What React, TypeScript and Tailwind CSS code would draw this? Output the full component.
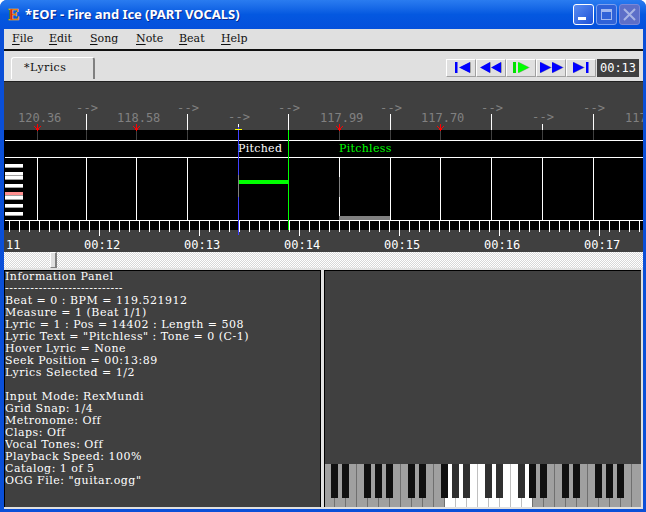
import React from 'react';

const BEATS = [37, 86, 136, 187, 238, 288, 339, 390, 440, 491, 542, 593];
const BPM_LABELS = [
  { x: 18, text: '120.36' },
  { x: 117, text: '118.58' },
  { x: 320, text: '117.99' },
  { x: 421, text: '117.70' },
  { x: 625, text: '117' },
];
const ARROWS = [
  { x: 76, y: 112 },
  { x: 177, y: 112 },
  { x: 228, y: 121 },
  { x: 278, y: 112 },
  { x: 380, y: 112 },
  { x: 481, y: 112 },
  { x: 532, y: 121 },
  { x: 583, y: 112 },
];
const TIMES = [
  { x: 6, text: '11' },
  { x: 84, text: '00:12' },
  { x: 184, text: '00:13' },
  { x: 284, text: '00:14' },
  { x: 384, text: '00:15' },
  { x: 484, text: '00:16' },
  { x: 584, text: '00:17' },
];
const KEY_BARS: [number, string][] = [
  [164, '#ffffff'],
  [172, '#ffffff'],
  [176, '#ffffff'],
  [184, '#ffffff'],
  [192, '#ff9090'],
  [196, '#ffffff'],
  [204, '#ffffff'],
  [212, '#ffffff'],
];
const BLACK_KEYS = [331, 342, 364, 375, 386, 408, 419, 441, 452, 463, 485, 496, 518, 529, 540, 562, 573, 595, 606, 617];
const INFO_LINES = [
  'Information Panel',
  '----------------------------',
  'Beat = 0 : BPM = 119.521912',
  'Measure = 1 (Beat 1/1)',
  'Lyric = 1 : Pos = 14402 : Length = 508',
  'Lyric Text = "Pitchless" : Tone = 0 (C-1)',
  'Hover Lyric = None',
  'Seek Position = 00:13:89',
  'Lyrics Selected = 1/2',
  '\u00a0',
  'Input Mode: RexMundi',
  'Grid Snap: 1/4',
  'Metronome: Off',
  'Claps: Off',
  'Vocal Tones: Off',
  'Playback Speed: 100%',
  'Catalog: 1 of 5',
  'OGG File: "guitar.ogg"',
];
const MENUS = [
  { first: 'F', rest: 'ile', w: 37 },
  { first: 'E', rest: 'dit', w: 41 },
  { first: 'S', rest: 'ong', w: 46 },
  { first: 'N', rest: 'ote', w: 43 },
  { first: 'B', rest: 'eat', w: 42 },
  { first: 'H', rest: 'elp', w: 30 },
];

const Timeline = () => {
  const ticks = [];
  for (let x = 9; x < 643; x += 10) {
    const major = (x - 99) % 100 === 0;
    ticks.push(<rect key={x} x={x} y={220} width={1} height={major ? 16 : 12} fill="#ffffff" />);
  }
  return (
    <svg width={639} height={171} viewBox="4 81 639 171" className="block" shapeRendering="crispEdges">
      <rect x={4} y={81} width={639} height={171} fill="#404040" />
      <rect x={4} y={81} width={639} height={1} fill="#202020" />
      <rect x={4} y={130} width={639} height={100} fill="#000000" />
      <rect x={5} y={140} width={638} height={1} fill="#ffffff" />
      <rect x={5} y={157} width={638} height={1} fill="#ffffff" />
      <rect x={5} y={220} width={638} height={1} fill="#ffffff" />

      {KEY_BARS.map(([y, c], i) => (
        <g key={i}>
          <rect x={5} y={y} width={18} height={3} fill={c} />
          <rect x={5} y={y + 3} width={18} height={1} fill="#a0a0a0" />
        </g>
      ))}

      {BEATS.map((x) => {
        const measure = [37, 136, 339, 440].includes(x);
        const top = x === 542 ? 124 : 114;
        return (
          <g key={x}>
            {x !== 238 && x !== 288 && !measure && <rect x={x} y={top} width={1} height={130 - top} fill="#ffffff" />}
            <rect x={x} y={130} width={1} height={10} fill="#404040" />
            <rect x={x} y={157} width={1} height={63} fill="#ffffff" />
            {measure && (
              <g fill="#ff0000">
                <rect x={x} y={124} width={1} height={7} />
                <rect x={x - 3} y={126} width={1} height={1} />
                <rect x={x + 3} y={126} width={1} height={1} />
                <rect x={x - 2} y={127} width={1} height={1} />
                <rect x={x + 2} y={127} width={1} height={1} />
                <rect x={x - 1} y={128} width={3} height={2} />
              </g>
            )}
          </g>
        );
      })}

      {ticks}

      <rect x={288} y={114} width={1} height={16} fill="#ffffff" />
      <rect x={288} y={130} width={1} height={100} fill="#00ff00" />
      <rect x={238} y={124} width={1} height={33} fill="#4040ff" />
      <rect x={238} y={124} width={1} height={3} fill="#ffffff" />
      <rect x={235} y={129} width={7} height={1} fill="#ffff00" />
      <rect x={238} y={157} width={1} height={78} fill="#4040ff" />
      <rect x={238} y={175} width={1} height={22} fill="#808080" />
      <rect x={239} y={180} width={49} height={4} fill="#00ff00" />
      <rect x={339} y={177} width={1} height={20} fill="#808080" />
      <rect x={339} y={216} width={51} height={4} fill="#808080" />

      <g fontFamily="'DejaVu Sans Mono', monospace" fontSize={12} fill="#808080" shapeRendering="auto">
        {BPM_LABELS.map((l) => (
          <text key={l.x} x={l.x} y={122}>{l.text}</text>
        ))}
        {ARROWS.map((a) => (
          <text key={a.x} x={a.x} y={a.y} textLength={22}>--&gt;</text>
        ))}
      </g>
      <g fontFamily="'DejaVu Sans Mono', monospace" fontSize={12} fill="#ffffff">
        {TIMES.map((t) => (
          <text key={t.x} x={t.x} y={249}>{t.text}</text>
        ))}
      </g>
      <g fontFamily="'DejaVu Serif', serif" fontSize={11} letterSpacing={0.3}>
        <text x={238} y={152} fill="#ffffff">Pitched</text>
        <text x={339} y={152} fill="#00ff00">Pitchless</text>
      </g>
    </svg>
  );
};

const Piano = () => (
  <svg width={316} height={43} viewBox="325 465 316 43" className="block" shapeRendering="crispEdges">
    <rect x={325} y={465} width={316} height={43} fill="#a0a0a0" />
    <rect x={445} y={465} width={88} height={43} fill="#ffffff" />
    {Array.from({ length: 28 }, (_, i) => {
      const x = 334 + i * 11;
      return <rect key={x} x={x} y={465} width={1} height={43} fill={x >= 445 && x < 532 ? '#c0c0c0' : '#707070'} />;
    })}
    {BLACK_KEYS.map((x) => (
      <rect key={x} x={x} y={465} width={7} height={34} fill={x >= 452 && x <= 518 ? '#303030' : '#101010'} />
    ))}
  </svg>
);

const Transport = ({ children }: { children: React.ReactNode }) => (
  <div className="w-[30px] h-[18px] bg-[#e0e0e0] border-t border-l border-t-white border-l-white border-r border-b border-r-[#a0a0a0] border-b-[#a0a0a0]">
    <svg width={28} height={16} viewBox="1 1 28 16" className="block">{children}</svg>
  </div>
);

const Tri = ({ x, w, dir, fill }: { x: number; w: number; dir: 'l' | 'r'; fill: string }) => {
  const d = dir === 'l' ? `M${x} 8.5L${x + w} 3V14Z` : `M${x} 3L${x + w} 8.5L${x} 14Z`;
  const shadow = dir === 'l' ? `M${x + 1} 8.5L${x + w + 1} 3V14Z` : `M${x + 1} 3L${x + w + 1} 8.5L${x + 1} 14Z`;
  return (
    <>
      <path d={shadow} fill="#a0a0a0" />
      <path d={d} fill={fill} />
    </>
  );
};

export default function App() {
  return (
    <div className="w-[646px] h-[512px] flex flex-col overflow-hidden bg-[#0a4fd8] rounded-t-[7px]">
      {/* title bar */}
      <div className="h-[29px] shrink-0 flex items-center pl-[5px] pr-[6px] bg-gradient-to-b from-[#2a7cf0] via-[#0458e0] to-[#0550dc]">
        <span className="w-[18px] text-center text-[17px] font-bold leading-none text-[#d82010] font-['Liberation_Serif',serif] [-webkit-text-stroke:0.5px_#f8c820]">E</span>
        <span className="ml-[2px] mt-[1px] text-[13px] tracking-[-0.05px] font-bold text-white font-['Noto_Sans',sans-serif] [text-shadow:1px_1px_0_#0a2a90]">*EOF - Fire and Ice (PART VOCALS)</span>
        <div className="ml-auto flex items-center gap-[2px]">
          <div className="w-[21px] h-[21px] rounded-[3px] border border-white bg-gradient-to-br from-[#5c8cf0] to-[#1c50d8] flex items-end pb-[4px] pl-[4px]">
            <div className="w-[8px] h-[3px] bg-white" />
          </div>
          <div className="w-[21px] h-[21px] rounded-[3px] border border-[#7aa0f0] bg-[#2f62d8] flex items-center justify-center">
            <div className="w-[11px] h-[11px] border border-[#a0b8f0] border-t-[3px]" />
          </div>
          <div className="w-[21px] h-[21px] rounded-[3px] border border-[#7a88d8] bg-[#5d6fc8] flex items-center justify-center">
            <svg width={13} height={13} viewBox="0 0 13 13">
              <path d="M1 1L12 12M12 1L1 12" stroke="#a8b4e4" strokeWidth={2} />
            </svg>
          </div>
        </div>
      </div>

      <div className="flex-1 min-h-0 ml-[4px] mr-[3px] mb-[3px] bg-[#e0e0e0] flex flex-col">
        {/* menu */}
        <div className="h-[22px] shrink-0 flex items-center pl-[8px] pt-[1px] border-b-2 border-[#101010] text-[11px] text-[#101010] font-['DejaVu_Serif',serif]">
          {MENUS.map((m) => (
            <span key={m.first} style={{ width: m.w }}>
              <span className="underline underline-offset-2">{m.first}</span>
              {m.rest}
            </span>
          ))}
        </div>

        {/* tab row */}
        <div className="h-[30px] shrink-0 flex items-start justify-between pr-[4px]">
          <div className="ml-[7px] mt-[6px] w-[84px] h-[22px] rounded-t-[3px] bg-[#e0e0e0] border-t border-l border-white border-r-2 border-r-[#808080] pl-[12px] text-[11px] tracking-[0.4px] leading-[20px] text-[#101010] font-['DejaVu_Serif',serif]">
            *Lyrics
          </div>
          <div className="mt-[8px] flex">
            <Transport>
              <rect x={9} y={3} width={2.5} height={11} fill="#0000ff" />
              <Tri x={13} w={11} dir="l" fill="#0000ff" />
            </Transport>
            <Transport>
              <Tri x={4} w={10} dir="l" fill="#0000ff" />
              <Tri x={15} w={10} dir="l" fill="#0000ff" />
            </Transport>
            <Transport>
              <rect x={7} y={3} width={3} height={11} fill="#00e000" />
              <Tri x={12} w={11} dir="r" fill="#00ff00" />
            </Transport>
            <Transport>
              <Tri x={4} w={11} dir="r" fill="#0000ff" />
              <Tri x={16} w={11} dir="r" fill="#0000ff" />
            </Transport>
            <Transport>
              <Tri x={7} w={11} dir="r" fill="#0000ff" />
              <rect x={20} y={3} width={2.5} height={11} fill="#0000ff" />
            </Transport>
            <div className="ml-[1px] w-[42px] h-[18px] bg-[#404040] text-white text-[12px] leading-[18px] text-center font-['DejaVu_Sans_Mono',monospace]">00:13</div>
          </div>
        </div>

        {/* editor */}
        <div className="shrink-0">
          <Timeline />
        </div>

        {/* scrollbar */}
        <div className="h-[16px] shrink-0 pl-[46px] bg-[repeating-conic-gradient(#d8d8d8_0_25%,#ffffff_0_50%)] bg-[length:2px_2px]">
          <div className="w-[7px] h-[16px] bg-[#e0e0e0] border-t border-l border-white border-r-2 border-b border-r-[#808080] border-b-[#808080]" />
        </div>

        {/* panels */}
        <div className="flex-1 min-h-0 mt-[2px] mb-[2px] flex gap-[3px] pr-[2px]">
          <div className="w-[318px] border border-black border-b-0 bg-[#404040] text-white text-[11px] tracking-[0.5px] leading-[12px] whitespace-nowrap overflow-hidden font-['DejaVu_Serif',serif]">
            {INFO_LINES.map((line, i) => (
              <div key={i} className="h-[12px]">{line}</div>
            ))}
          </div>
          <div className="flex-1 flex flex-col justify-end border-l border-t border-black bg-[#404040]">
            <Piano />
          </div>
        </div>
      </div>
    </div>
  );
}
